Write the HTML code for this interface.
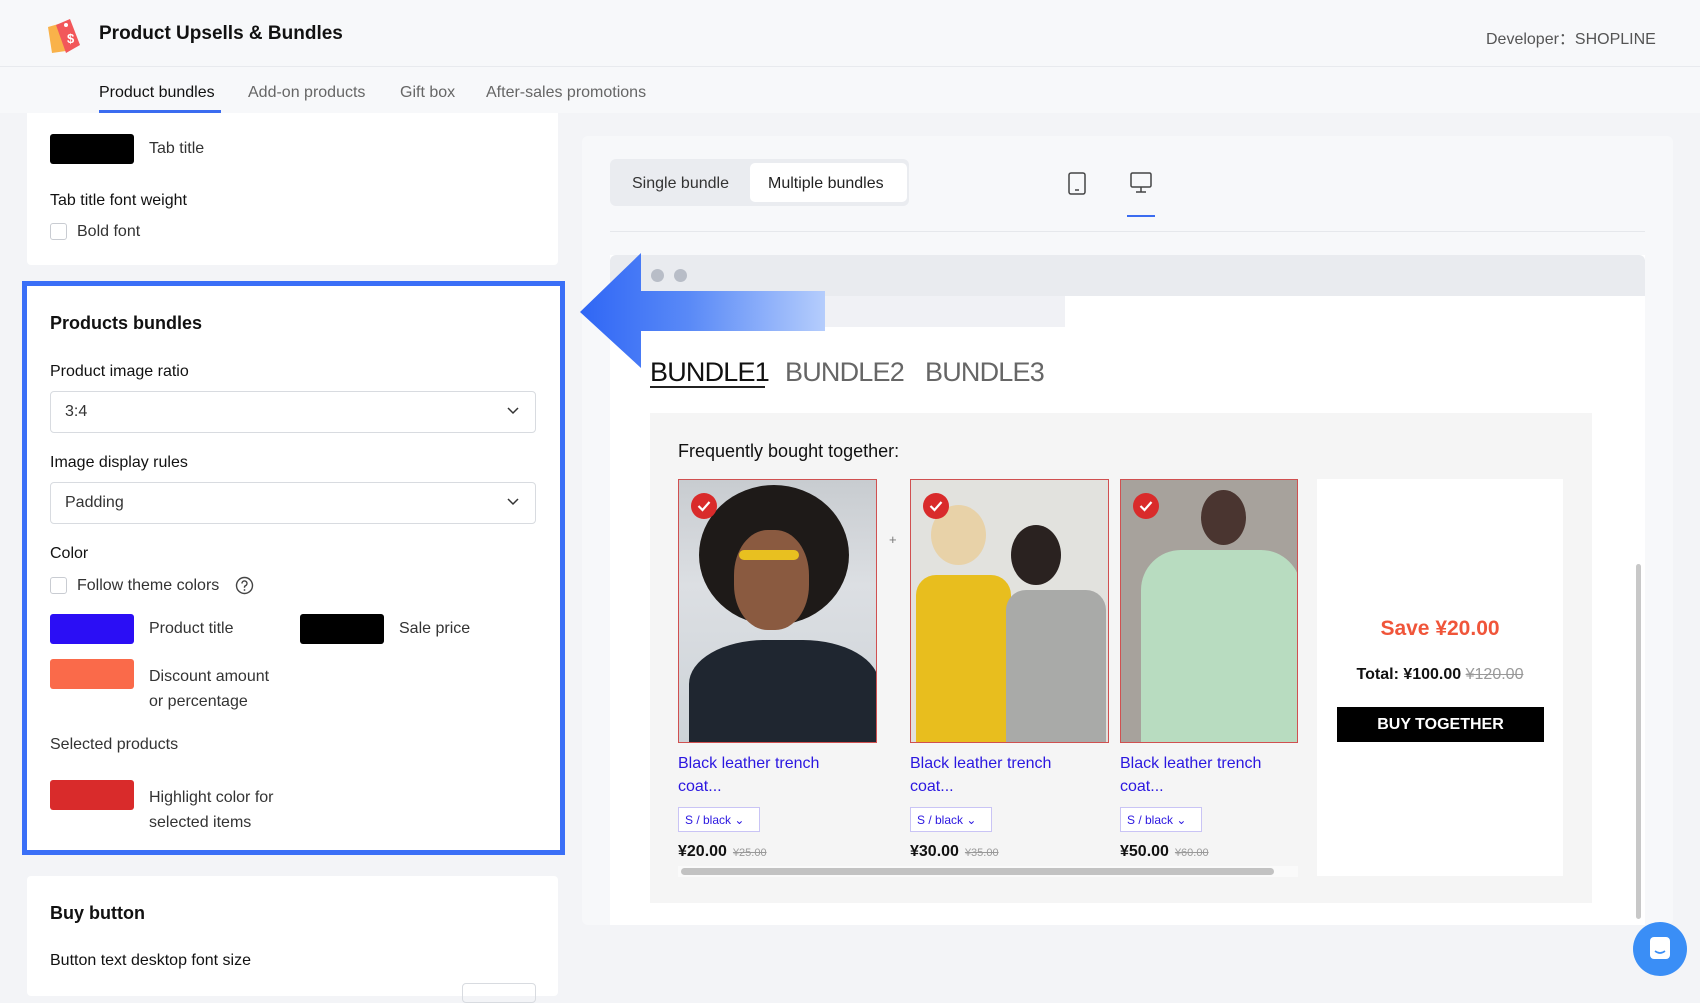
<!DOCTYPE html>
<html><head><meta charset="utf-8"><style>
*{box-sizing:border-box;margin:0;padding:0}
body{width:1700px;height:990px;overflow:hidden;background:#f3f4f7;font-family:"Liberation Sans",sans-serif;color:#1f2329;position:relative}
.a{position:absolute}
.t{font-size:16px;color:#333;white-space:nowrap}
.sw{position:absolute;width:84px;height:30px;border-radius:3px}
.sel{position:absolute;left:50px;width:486px;height:42px;border:1px solid #d8dbe0;border-radius:4px;background:#fff;font-size:16px;padding:11px 14px;color:#333}
.sel svg{position:absolute;right:16px;top:15px}
.cb{position:absolute;width:17px;height:17px;border:1px solid #c9ccd2;border-radius:3px;background:#fff}
.img{position:absolute;top:479px;height:264px;border:1px solid #d05050;overflow:hidden}
.chk{position:absolute;left:12px;top:13px;width:26px;height:26px;border-radius:50%;background:#d92b2b}
.pt{position:absolute;font-size:16px;color:#2b17e0;line-height:23px;white-space:nowrap}
.vs{position:absolute;top:807px;width:82px;height:25px;border:1px solid #c9c4f5;background:#fff;font-size:12px;color:#2b17e0;padding:5px 6px;white-space:nowrap}
.pr{position:absolute;top:843px;font-size:16px;font-weight:bold;color:#111;white-space:nowrap}
.pr s{font-size:11px;font-weight:normal;color:#999;margin-left:6px}
.bd{position:absolute;top:357px;font-size:27px;letter-spacing:-0.8px;white-space:nowrap}
</style></head><body>
<div class="a" style="left:0;top:0;width:1700px;height:67px;background:#f7f8fa;border-bottom:1px solid #e8eaee"></div>
<svg class="a" style="left:44px;top:13px" width="40" height="40" viewBox="0 0 40 40"><path d="M4 14 L18 10 L22 38 L8 40 Z" fill="#f9b24a"/><path d="M12 12 L26 6 L36 32 L22 40 Z" fill="#f2575a"/><circle cx="22" cy="12" r="2" fill="#fff"/><text x="23" y="30" font-size="13" fill="#fff" font-family="Liberation Sans" font-weight="bold">$</text></svg>
<div class="a" style="left:99px;top:23px;font-size:19px;font-weight:bold;color:#111">Product Upsells &amp; Bundles</div>
<div class="a" style="left:1486px;top:25px;font-size:16px;color:#555">Developer：SHOPLINE</div>
<div class="a" style="left:0;top:67px;width:1700px;height:46px;background:#f7f8fa"></div>
<div class="a t" style="left:99px;top:84px;color:#111">Product bundles</div>
<div class="a" style="left:99px;top:110px;width:122px;height:3px;background:#3b6cf0"></div>
<div class="a t" style="left:248px;top:84px;color:#666">Add-on products</div>
<div class="a t" style="left:400px;top:84px;color:#666">Gift box</div>
<div class="a t" style="left:486px;top:84px;color:#666">After-sales promotions</div>
<div class="a" style="left:27px;top:113px;width:531px;height:152px;background:#fff;border-radius:0 0 4px 4px"></div>
<div class="sw" style="left:50px;top:134px;background:#000"></div>
<div class="a t" style="left:149px;top:140px">Tab title</div>
<div class="a t" style="left:50px;top:192px;color:#111">Tab title font weight</div>
<div class="cb" style="left:50px;top:223px"></div>
<div class="a t" style="left:77px;top:223px">Bold font</div>

<div class="a" style="left:22px;top:281px;width:543px;height:574px;background:#fff;border:5px solid #3a6ff7"></div>
<div class="a" style="left:50px;top:313px;font-size:18px;font-weight:bold;color:#111">Products bundles</div>
<div class="a t" style="left:50px;top:363px;color:#111">Product image ratio</div>
<div class="sel" style="top:391px">3:4<svg width="12" height="8" viewBox="0 0 12 8"><path d="M1 1l5 5 5-5" fill="none" stroke="#333" stroke-width="1.5"/></svg></div>
<div class="a t" style="left:50px;top:454px;color:#111">Image display rules</div>
<div class="sel" style="top:482px">Padding<svg width="12" height="8" viewBox="0 0 12 8"><path d="M1 1l5 5 5-5" fill="none" stroke="#333" stroke-width="1.5"/></svg></div>
<div class="a t" style="left:50px;top:545px;color:#111">Color</div>
<div class="cb" style="left:50px;top:577px"></div>
<div class="a t" style="left:77px;top:577px">Follow theme colors</div>
<svg class="a" style="left:235px;top:576px" width="19" height="19" viewBox="0 0 19 19"><circle cx="9.5" cy="9.5" r="8" fill="none" stroke="#444" stroke-width="1.4"/><path d="M7 7.5a2.5 2.5 0 1 1 3.5 2.2c-.7.3-1 .8-1 1.5v.6" fill="none" stroke="#444" stroke-width="1.4"/><circle cx="9.5" cy="14" r=".9" fill="#444"/></svg>
<div class="sw" style="left:50px;top:614px;background:#2b0ef5"></div>
<div class="a t" style="left:149px;top:620px">Product title</div>
<div class="sw" style="left:300px;top:614px;background:#000"></div>
<div class="a t" style="left:399px;top:620px">Sale price</div>
<div class="sw" style="left:50px;top:659px;background:#fa6a4a"></div>
<div class="a t" style="left:149px;top:664px;line-height:25px">Discount amount<br>or percentage</div>
<div class="a t" style="left:50px;top:736px">Selected products</div>
<div class="sw" style="left:50px;top:780px;background:#d92b2b"></div>
<div class="a t" style="left:149px;top:785px;line-height:25px">Highlight color for<br>selected items</div>

<div class="a" style="left:27px;top:876px;width:531px;height:120px;background:#fff;border-radius:4px"></div>
<div class="a" style="left:50px;top:903px;font-size:18px;font-weight:bold;color:#111">Buy button</div>
<div class="a t" style="left:50px;top:952px;color:#111">Button text desktop font size</div>
<div class="a" style="left:462px;top:983px;width:74px;height:20px;border:1px solid #d8dbe0;border-radius:4px"></div>

<div class="a" style="left:582px;top:136px;width:1091px;height:789px;background:#f7f8fa;border-radius:6px"></div>
<div class="a" style="left:610px;top:159px;width:299px;height:47px;background:#eaecf0;border-radius:6px"></div>
<div class="a" style="left:632px;top:175px;font-size:16px;color:#333">Single bundle</div>
<div class="a" style="left:750px;top:163px;width:157px;height:39px;background:#fff;border-radius:5px"></div>
<div class="a" style="left:768px;top:175px;font-size:16px;color:#222">Multiple bundles</div>
<svg class="a" style="left:1067px;top:171px" width="20" height="25" viewBox="0 0 20 25"><rect x="2" y="2" width="16" height="21" rx="2" fill="none" stroke="#444" stroke-width="1.5"/><path d="M8 19h4" stroke="#444" stroke-width="1.5"/></svg>
<svg class="a" style="left:1129px;top:171px" width="24" height="24" viewBox="0 0 24 24"><rect x="2" y="2" width="20" height="14" rx="1.5" fill="none" stroke="#444" stroke-width="1.5"/><path d="M12 16v5M7 21h10" stroke="#444" stroke-width="1.5"/></svg>
<div class="a" style="left:1127px;top:215px;width:28px;height:2px;background:#3b6cf0"></div>
<div class="a" style="left:610px;top:231px;width:1035px;height:1px;background:#e6e8ec"></div>

<div class="a" style="left:610px;top:255px;width:1035px;height:670px;background:#fff"></div>
<div class="a" style="left:610px;top:255px;width:1035px;height:41px;background:#e9ebef;border-radius:6px 6px 0 0"></div>
<div class="a" style="left:651px;top:269px;width:13px;height:13px;border-radius:50%;background:#b8bdc7"></div>
<div class="a" style="left:674px;top:269px;width:13px;height:13px;border-radius:50%;background:#b8bdc7"></div>
<div class="a" style="left:640px;top:296px;width:425px;height:31px;background:#f0f1f5"></div>
<div class="a" style="left:1636px;top:564px;width:5px;height:355px;background:#c8c8c8;border-radius:3px"></div>

<svg class="a" style="left:580px;top:253px" width="250" height="115" viewBox="0 0 250 115"><defs><linearGradient id="g" x1="0" x2="1"><stop offset="0" stop-color="#2f66f5"/><stop offset=".45" stop-color="#5a8af7"/><stop offset="1" stop-color="#b5cdfc"/></linearGradient></defs><path d="M0 59 L61 0 L61 38 L245 38 L245 78 L61 78 L61 115 Z" fill="url(#g)"/></svg>

<div class="bd" style="left:650px;color:#111">BUNDLE1</div>
<div class="a" style="left:650px;top:386px;width:115px;height:2px;background:#222"></div>
<div class="bd" style="left:785px;color:#666">BUNDLE2</div>
<div class="bd" style="left:925px;color:#666">BUNDLE3</div>

<div class="a" style="left:650px;top:413px;width:942px;height:490px;background:#f5f5f5"></div>
<div class="a" style="left:678px;top:441px;font-size:18px;color:#111">Frequently bought together:</div>

<div class="img" style="left:678px;width:199px;background:linear-gradient(180deg,#c8ccd0 0%,#dcdfe3 40%,#cdd3d8 100%)">
 <div class="a" style="left:20px;top:5px;width:150px;height:140px;border-radius:50%;background:#1e1a18"></div>
 <div class="a" style="left:55px;top:50px;width:75px;height:100px;border-radius:45%;background:#8a5a40"></div>
 <div class="a" style="left:60px;top:70px;width:60px;height:10px;background:#e8c020;border-radius:5px"></div>
 <div class="a" style="left:10px;top:160px;width:190px;height:110px;background:#1f2630;border-radius:40% 40% 0 0"></div>
 <div class="chk"><svg width="26" height="26" viewBox="0 0 26 26"><path d="M7.5 13l4 4 7-8" fill="none" stroke="#fff" stroke-width="2.2"/></svg></div>
</div>
<div class="a" style="left:889px;top:532px;font-size:13px;color:#777">+</div>
<div class="img" style="left:910px;width:199px;background:#e2e2de">
 <div class="a" style="left:20px;top:25px;width:55px;height:60px;border-radius:50%;background:#e8d2a8"></div>
 <div class="a" style="left:100px;top:45px;width:50px;height:60px;border-radius:50%;background:#2a2220"></div>
 <div class="a" style="left:5px;top:95px;width:95px;height:170px;background:#e8be1e;border-radius:20px 20px 0 0"></div>
 <div class="a" style="left:95px;top:110px;width:100px;height:155px;background:#a9aaa8;border-radius:20px 20px 0 0"></div>
 <div class="chk"><svg width="26" height="26" viewBox="0 0 26 26"><path d="M7.5 13l4 4 7-8" fill="none" stroke="#fff" stroke-width="2.2"/></svg></div>
</div>
<div class="img" style="left:1120px;width:178px;background:#a7a29c">
 <div class="a" style="left:80px;top:10px;width:45px;height:55px;border-radius:50%;background:#4a3530"></div>
 <div class="a" style="left:20px;top:70px;width:160px;height:195px;background:#b8dcc0;border-radius:40px 40px 0 0"></div>
 <div class="chk"><svg width="26" height="26" viewBox="0 0 26 26"><path d="M7.5 13l4 4 7-8" fill="none" stroke="#fff" stroke-width="2.2"/></svg></div>
</div>

<div class="pt" style="left:678px;top:752px">Black leather trench<br>coat...</div>
<div class="pt" style="left:910px;top:752px">Black leather trench<br>coat...</div>
<div class="pt" style="left:1120px;top:752px">Black leather trench<br>coat...</div>
<div class="vs" style="left:678px">S / black ⌄</div>
<div class="vs" style="left:910px">S / black ⌄</div>
<div class="vs" style="left:1120px">S / black ⌄</div>
<div class="pr" style="left:678px">¥20.00<s>¥25.00</s></div>
<div class="pr" style="left:910px">¥30.00<s>¥35.00</s></div>
<div class="pr" style="left:1120px">¥50.00<s>¥60.00</s></div>
<div class="a" style="left:678px;top:866px;width:620px;height:11px;background:#fafafa"></div>
<div class="a" style="left:681px;top:868px;width:593px;height:7px;background:#c2c2c2;border-radius:4px"></div>

<div class="a" style="left:1317px;top:479px;width:246px;height:397px;background:#fff"></div>
<div class="a" style="left:1317px;top:617px;width:246px;text-align:center;font-size:21px;font-weight:bold;color:#f0553a">Save ¥20.00</div>
<div class="a" style="left:1317px;top:666px;width:246px;text-align:center;font-size:16px;font-weight:bold;color:#111">Total: ¥100.00 <s style="font-weight:normal;color:#999">¥120.00</s></div>
<div class="a" style="left:1337px;top:707px;width:207px;height:35px;background:#000;color:#fff;font-size:16px;font-weight:bold;text-align:center;line-height:35px">BUY TOGETHER</div>

<div class="a" style="left:1633px;top:922px;width:54px;height:54px;border-radius:50%;background:#3a8ef6"></div>
<svg class="a" style="left:1648px;top:935px" width="24" height="28" viewBox="0 0 24 28"><rect x="2" y="2" width="20" height="22" rx="4" fill="#fff"/><path d="M7 16q5 4 10 0" fill="none" stroke="#3a8ef6" stroke-width="1.6"/></svg>
</body></html>
